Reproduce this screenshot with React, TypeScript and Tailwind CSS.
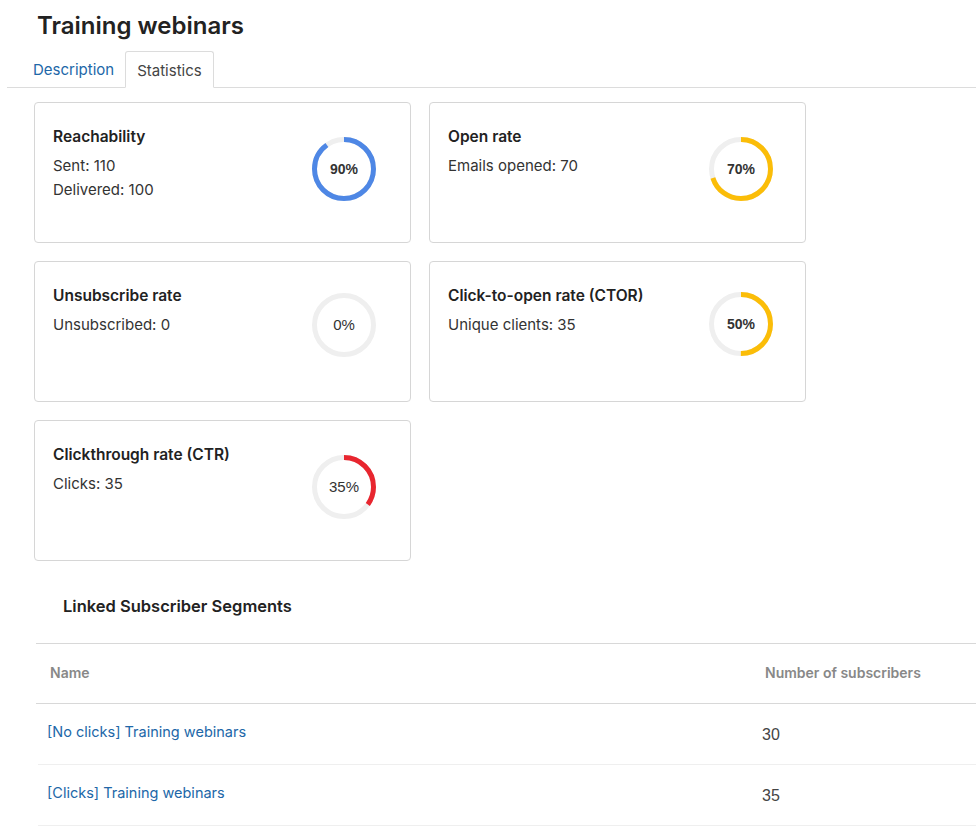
import React from "react";

interface StatCardProps {
  title: string;
  lines: string[];
  percent: number;
  color: string;
  bold?: boolean;
  ringTop: string;
}

const INTER = "font-['Inter','Noto_Sans',sans-serif]";

function Donut({ percent, color, bold = true }: { percent: number; color: string; bold?: boolean }) {
  const r = 29.5;
  const c = 2 * Math.PI * r;
  return (
    <div className="relative h-[66px] w-[66px]">
      <svg width="66" height="66" viewBox="0 0 66 66" className="-rotate-90">
        <circle cx="33" cy="33" r={r} fill="none" stroke="#efefef" strokeWidth="5" />
        {percent > 0 && (
          <circle
            cx="33"
            cy="33"
            r={r}
            fill="none"
            stroke={color}
            strokeWidth="5"
            strokeDasharray={`${(c * percent) / 100} ${c}`}
          />
        )}
      </svg>
      <span
        className={`absolute inset-0 flex items-center justify-center text-[14px] text-[#333] font-['Liberation_Sans',Arial,sans-serif] ${
          bold ? "font-bold" : "text-[15px]"
        }`}
      >
        {percent}%
      </span>
    </div>
  );
}

function StatCard({ title, lines, percent, color, bold, ringTop }: StatCardProps) {
  return (
    <div className="flex h-[141px] w-[377px] justify-between rounded-[4px] border border-[#d6d6d6] bg-white pl-[18px] pr-[33px] pt-[24px]">
      <div>
        <div className="mb-[7px] text-[15.5px] font-semibold leading-[20px] text-[#222]">{title}</div>
        {lines.map((line) => (
          <div key={line} className="text-[15px] leading-[24px] text-[#333]">
            {line}
          </div>
        ))}
      </div>
      <div className={ringTop}>
        <Donut percent={percent} color={color} bold={bold} />
      </div>
    </div>
  );
}

export default function App() {
  return (
    <div className={`min-h-[830px] w-[976px] bg-white ${INTER}`}>
      <h1 className="pl-[37px] pt-[10px] text-[24px] font-semibold leading-[32px] text-[#222]">Training webinars</h1>

      <div className="ml-[7px] mt-[9px] flex h-[37px] items-end border-b border-[#dcdcdc] pl-[19px]">
        <div className="flex h-[36px] items-center px-[7px] pt-[3px] text-[15px] text-[#2167a8]">Description</div>
        <div className="-mb-px ml-[4px] flex h-[37px] items-center rounded-t-[3px] border border-b-white border-[#dcdcdc] bg-white px-[11px] pt-[3px] text-[15px] text-[#444]">
          Statistics
        </div>
      </div>

      <div className="ml-[34px] mt-[14px] grid w-[772px] grid-cols-[377px_377px] gap-x-[18px] gap-y-[18px]">
        <StatCard title="Reachability" lines={["Sent: 110", "Delivered: 100"]} percent={90} color="#4e87e5" ringTop="pt-[9px]" />
        <StatCard title="Open rate" lines={["Emails opened: 70"]} percent={70} color="#fbbd08" ringTop="-mr-[2px] pt-[9px]" />
        <StatCard title="Unsubscribe rate" lines={["Unsubscribed: 0"]} percent={0} color="#fbbd08" bold={false} ringTop="pt-[6px]" />
        <StatCard title="Click-to-open rate (CTOR)" lines={["Unique clients: 35"]} percent={50} color="#fbbd08" ringTop="-mr-[2px] pt-[5px]" />
        <StatCard title="Clickthrough rate (CTR)" lines={["Clicks: 35"]} percent={35} color="#e8262f" bold={false} ringTop="pt-[9px]" />
      </div>

      <div className="pl-[63px] pt-[33px] text-[16.5px] font-semibold leading-[24px] text-[#222]">
        Linked Subscriber Segments
      </div>

      <div className="ml-[36px] mt-[25px] border-t border-[#d8d8d8]">
        <div className="flex h-[60px] items-center border-b border-[#d8d8d8] pb-[2px] text-[14px] font-semibold text-[#888]">
          <div className="w-[729px] pl-[14px]">Name</div>
          <div>Number of subscribers</div>
        </div>
        {[
          ["[No clicks] Training webinars", "30"],
          ["[Clicks] Training webinars", "35"],
        ].map(([name, count]) => (
          <div key={name} className="ml-[2px] flex h-[61px] items-center border-b border-[#efefef]">
            <div className="w-[724px] pb-[5px] pl-[9px] text-[14.5px] text-[#2167a8]">{name}</div>
            <div className="pt-[2px] text-[16px] text-[#444] font-['Liberation_Sans',Arial,sans-serif]">{count}</div>
          </div>
        ))}
      </div>
    </div>
  );
}
